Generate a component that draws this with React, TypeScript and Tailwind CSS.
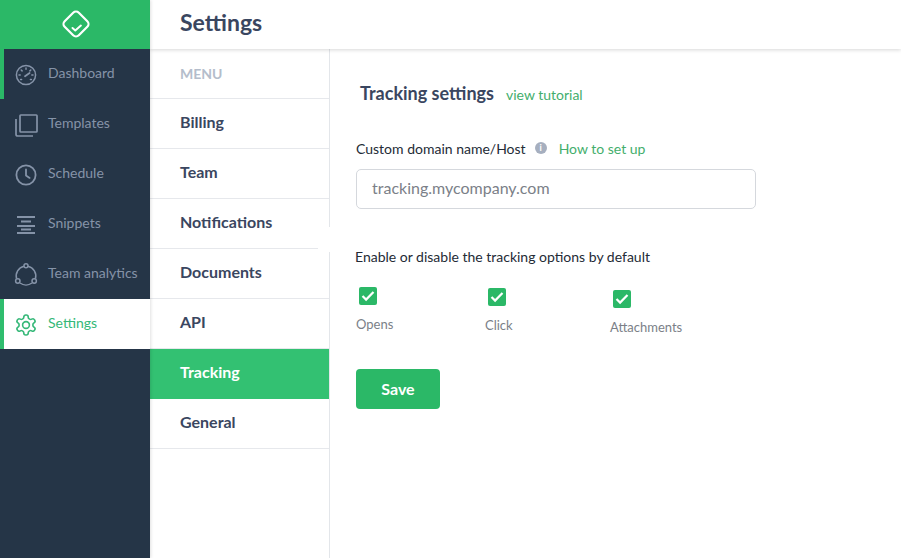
import React from "react";

const Gauge = () => (
  <svg width="22" height="22" viewBox="0 0 22 22" fill="none" stroke="currentColor" strokeWidth="1.5" strokeLinecap="round">
    <circle cx="11" cy="11" r="9.6" />
    <path d="M11 4v1.2M6.2 6l.9.9M4 11h1.2M18 11h-1.2M15.8 6l-.9.9M5.6 15.5h1M16.4 15.5h-1" />
    <path d="M10 12.2l4.6-3.2" strokeWidth="1.8" />
  </svg>
);
const Copy = () => (
  <svg width="23" height="23" viewBox="0 0 23 23" fill="none" stroke="currentColor" strokeWidth="1.7">
    <rect x="5" y="1" width="17" height="17" rx="0.8" />
    <path d="M1 5v15.2c0 1 .8 1.8 1.8 1.8H18" />
  </svg>
);
const Clock = () => (
  <svg width="22" height="22" viewBox="0 0 22 22" fill="none" stroke="currentColor" strokeWidth="1.8" strokeLinecap="round" strokeLinejoin="round">
    <circle cx="11" cy="11" r="9.6" />
    <path d="M11 5.5V11.5l3.6 2.4" />
  </svg>
);
const Lines = () => (
  <svg width="20" height="20" viewBox="0 0 20 20" fill="none" stroke="currentColor" strokeWidth="1.8">
    <path d="M1 2h18M5 6.5h10M1 11h18M5 14.5h10M1 18h18" />
  </svg>
);
const Analytics = () => (
  <svg width="24" height="24" viewBox="0 0 24 24" fill="none" stroke="currentColor" strokeWidth="1.5">
    <circle cx="12" cy="2.8" r="2" />
    <circle cx="3.8" cy="18" r="2.2" />
    <circle cx="20.2" cy="18" r="2.2" />
    <path d="M10 3.3A10 10 0 0 0 2.6 15.8M14 3.3A10 10 0 0 1 21.4 15.8M6 20A10 10 0 0 0 18 20" />
  </svg>
);
const Gear = () => (
  <svg width="24" height="24" viewBox="0 0 24 24" fill="none" stroke="currentColor" strokeWidth="1.6" strokeLinecap="round" strokeLinejoin="round">
    <circle cx="12" cy="12" r="3.4" />
    <path d="M12.22 2h-.44a2 2 0 0 0-2 2v.18a2 2 0 0 1-1 1.73l-.43.25a2 2 0 0 1-2 0l-.15-.08a2 2 0 0 0-2.73.73l-.22.38a2 2 0 0 0 .73 2.73l.15.1a2 2 0 0 1 1 1.72v.51a2 2 0 0 1-1 1.74l-.15.09a2 2 0 0 0-.73 2.73l.22.38a2 2 0 0 0 2.73.73l.15-.08a2 2 0 0 1 2 0l.43.25a2 2 0 0 1 1 1.73V20a2 2 0 0 0 2 2h.44a2 2 0 0 0 2-2v-.18a2 2 0 0 1 1-1.73l.43-.25a2 2 0 0 1 2 0l.15.08a2 2 0 0 0 2.73-.73l.22-.39a2 2 0 0 0-.73-2.73l-.15-.08a2 2 0 0 1-1-1.74v-.5a2 2 0 0 1 1-1.74l.15-.09a2 2 0 0 0 .73-2.73l-.22-.38a2 2 0 0 0-2.73-.73l-.15.08a2 2 0 0 1-2 0l-.43-.25a2 2 0 0 1-1-1.73V4a2 2 0 0 0-2-2z" />
  </svg>
);

const Check = () => (
  <span className="flex h-[18px] w-[18px] items-center justify-center rounded-[2px] bg-[#2bb867]">
    <svg width="14" height="12" viewBox="0 0 14 12" fill="none" stroke="white" strokeWidth="2.2">
      <path d="M1.5 6l3.6 3.6L12.5 2" />
    </svg>
  </span>
);

const nav: { label: string; icon: React.ReactNode; state?: string }[] = [
  { label: "Dashboard", icon: <Gauge />, state: "bar" },
  { label: "Templates", icon: <Copy /> },
  { label: "Schedule", icon: <Clock /> },
  { label: "Snippets", icon: <Lines /> },
  { label: "Team analytics", icon: <Analytics /> },
  { label: "Settings", icon: <Gear />, state: "active" },
];

const menu = ["Billing", "Team", "Notifications", "Documents", "API", "Tracking", "General"];

export default function App() {
  return (
    <div className="flex h-[558px] w-[901px] overflow-hidden bg-white font-['Lato','Liberation_Sans',sans-serif]">
      <aside className="z-20 flex w-[150px] shrink-0 flex-col bg-[#253547] shadow-[1px_0_3px_rgba(0,0,0,0.12)]">
        <div className="flex h-[49px] items-center justify-center bg-[#2bb867] pb-[2px] pl-px">
          <svg width="30" height="30" viewBox="0 0 30 30" fill="none" stroke="white" strokeWidth="2.2" strokeLinejoin="round" strokeLinecap="round">
            <rect x="5" y="5" width="20" height="20" rx="4" transform="rotate(45 15 15)" />
            <path d="M11.5 19l2.8 2.4 5.6-4.8" strokeWidth="2" />
          </svg>
        </div>
        {nav.map((n) => (
          <div
            key={n.label}
            className={
              "flex h-[50px] items-center border-l-[4px] " +
              (n.state === "active"
                ? "border-[#2fbd6e] bg-white text-[#35b878]"
                : n.state === "bar"
                  ? "border-[#2bb867] text-[#8593a8]"
                  : "border-transparent text-[#8593a8]")
            }
          >
            <span className="mt-[2px] flex w-[44px] shrink-0 justify-center">{n.icon}</span>
            <span className="-mt-[4px] text-[14px] whitespace-nowrap">{n.label}</span>
          </div>
        ))}
      </aside>
      <div className="flex min-w-0 flex-1 flex-col">
        <header className="z-10 flex h-[49px] shrink-0 items-center bg-white pb-[4px] pl-[30px] text-[23px] font-bold text-[#3a4660] shadow-[0_1px_4px_rgba(0,0,0,0.16)]">
          Settings
        </header>
        <div className="flex flex-1">
          <nav className="relative w-[180px] shrink-0 border-r border-[#e3e6ea]">
            <div className="flex h-[50px] items-center border-b border-[#e6e8ec] pl-[30px] text-[14px] font-bold text-[#b4bdcb]">
              MENU
            </div>
            {menu.map((m) => (
              <div
                key={m}
                className={
                  "flex h-[50px] items-center pb-[4px] pl-[30px] text-[16px] font-bold " +
                  (m === "Tracking"
                    ? "bg-[#33c172] text-white"
                    : "border-b border-[#e6e8ec] text-[#3a4660]")
                }
              >
                {m}
              </div>
            ))}
            <div className="absolute top-[178px] -right-px h-[25px] w-[12px] bg-white" />
          </nav>
          <main className="flex flex-1 flex-col pl-[26px] pt-[31px]">
            <div className="flex items-baseline pl-[4px]">
              <h2 className="text-[18px] font-bold text-[#3a4660]">Tracking settings</h2>
              <a className="ml-[12px] text-[14px] text-[#43ae6c]">view tutorial</a>
            </div>
            <div className="mt-[31px] flex h-[20px] items-center text-[14px]">
              <span className="text-[#242b36]">Custom domain name/Host</span>
              <span className="mb-[1px] ml-[9px] flex h-[12px] w-[12px] items-center justify-center rounded-full bg-[#a6afbf] text-[9px] font-bold text-white">
                i
              </span>
              <a className="ml-[12px] text-[#43ae6c]">How to set up</a>
            </div>
            <div className="mt-[11px] flex h-[40px] w-[400px] items-center rounded-[5px] border border-[#d5d8dd] pb-[2px] pl-[15px] text-[16px] text-[#7b7f88]">
              tracking.mycompany.com
            </div>
            <p className="mt-[38px] -ml-px text-[14px] leading-[20px] text-[#242b36]">
              Enable or disable the tracking options by default
            </p>
            <div className="mt-[20px] flex h-[60px] items-start text-[13px] text-[#7b7f88]">
              <div className="flex w-[129px] flex-col">
                <span className="ml-[3px]"><Check /></span>
                <span className="mt-[10px]">Opens</span>
              </div>
              <div className="mt-px flex w-[125px] flex-col">
                <span className="ml-[3px]"><Check /></span>
                <span className="mt-[10px]">Click</span>
              </div>
              <div className="mt-[3px] flex flex-col">
                <span className="ml-[3px]"><Check /></span>
                <span className="mt-[10px]">Attachments</span>
              </div>
            </div>
            <button className="mt-[22px] h-[40px] w-[84px] rounded-[4px] bg-[#2bb867] pb-[1px] text-[16px] font-bold text-white">
              Save
            </button>
          </main>
        </div>
      </div>
    </div>
  );
}
